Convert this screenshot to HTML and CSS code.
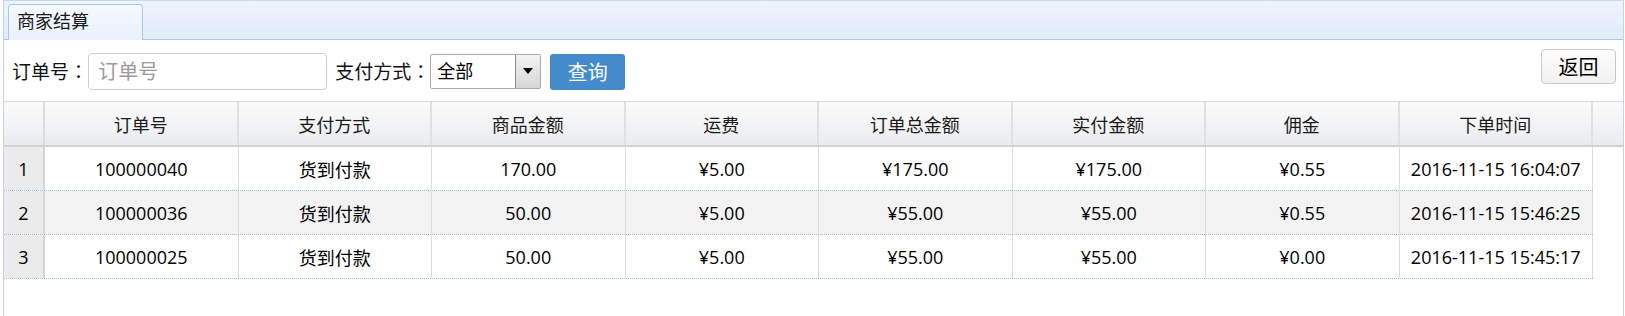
FILE: index.html
```html
<!DOCTYPE html>
<html lang="zh-CN">
<head>
    <meta charset="UTF-8">
    <meta name="viewport" content="width=device-width, initial-scale=1.0">
    <title>商家结算</title>
    <link rel="stylesheet" href="styles.css">
</head>
<body>
    <div class="panel">
        <div class="tabs">
            <div class="tab">商家结算</div>
        </div>
        <div class="toolbar">
            <label class="lbl">订单号<span class="colon" lang="zh-TW">：</span></label>
            <input type="text" class="txt" placeholder="订单号">
            <label class="lbl lbl-pay">支付方式<span class="colon" lang="zh-TW">：</span></label>
            <div class="sel">
                <span class="sel-text">全部</span>
                <span class="sel-btn"><span class="arrow"></span></span>
            </div>
            <button type="button" class="btn-query">查询</button>
            <button type="button" class="btn-back">返回</button>
        </div>
        <div class="grid">
            <div class="grid-head">
                <div class="cell num"></div>
                <div class="cell">订单号</div>
                <div class="cell">支付方式</div>
                <div class="cell">商品金额</div>
                <div class="cell">运费</div>
                <div class="cell">订单总金额</div>
                <div class="cell">实付金额</div>
                <div class="cell">佣金</div>
                <div class="cell">下单时间</div>
                <div class="cell filler"></div>
            </div>
            <div class="grid-row">
                <div class="cell num">1</div>
                <div class="cell">100000040</div>
                <div class="cell">货到付款</div>
                <div class="cell">170.00</div>
                <div class="cell">¥5.00</div>
                <div class="cell">¥175.00</div>
                <div class="cell">¥175.00</div>
                <div class="cell">¥0.55</div>
                <div class="cell">2016-11-15 16:04:07</div>
            </div>
            <div class="grid-row alt">
                <div class="cell num">2</div>
                <div class="cell">100000036</div>
                <div class="cell">货到付款</div>
                <div class="cell">50.00</div>
                <div class="cell">¥5.00</div>
                <div class="cell">¥55.00</div>
                <div class="cell">¥55.00</div>
                <div class="cell">¥0.55</div>
                <div class="cell">2016-11-15 15:46:25</div>
            </div>
            <div class="grid-row">
                <div class="cell num">3</div>
                <div class="cell">100000025</div>
                <div class="cell">货到付款</div>
                <div class="cell">50.00</div>
                <div class="cell">¥5.00</div>
                <div class="cell">¥55.00</div>
                <div class="cell">¥55.00</div>
                <div class="cell">¥0.00</div>
                <div class="cell">2016-11-15 15:45:17</div>
            </div>
        </div>
    </div>
</body>
</html>
```

FILE: styles.css
```css
body {
    margin: 0;
    font-family: "Open Sans", "Noto Sans CJK SC", sans-serif;
    font-size: 18px;
    color: #000;
    background: #fff;
}
.panel {
    margin-left: 3px;
    width: 1619px;
    height: 316px;
    border-left: 1px solid #c3d3e8;
    border-right: 1px solid #c3d3e8;
}
.tabs {
    height: 40px;
    padding-top: 3px;
    box-sizing: border-box;
    background: linear-gradient(#eef4fd, #e1ebfa);
    border-top: 1px solid #c6d9f3;
    border-bottom: 1px solid #a9c5ec;
    display: flex;
}
.tab {
    margin-left: 4px;
    width: 135px;
    height: 36px;
    box-sizing: border-box;
    border: 1px solid #a9c5ec;
    border-bottom: none;
    border-radius: 4px 4px 0 0;
    background: linear-gradient(#f6f9ff, #e9f1fd);
    padding-left: 8px;
    line-height: 32px;
    color: #1a1a1a;
}
.toolbar {
    height: 62px;
    display: flex;
    align-items: center;
    padding: 0 7px 0 8px;
    border-bottom: 1px solid #dcdcdc;
    box-sizing: border-box;
    font-size: 19px;
}
.lbl {
    color: #111;
    margin-right: 3px;
}
.colon {
    display: inline-block;
    width: 0.85em;
    text-align: center;
    font-family: "Noto Sans CJK TC", sans-serif;
}
.lbl-pay {
    margin-left: 8px;
}
.txt {
    width: 239px;
    height: 37px;
    box-sizing: border-box;
    border: 1px solid #ccc;
    border-radius: 4px;
    padding: 0 9px;
    font: inherit;
    font-size: 20px;
    margin-top: 1px;
}
.txt::placeholder {
    color: #999;
}
.sel {
    width: 111px;
    height: 35px;
    box-sizing: border-box;
    border: 1px solid #a9a9a9;
    border-radius: 2px;
    display: flex;
    align-items: stretch;
    margin-top: 1px;
    font-size: 18px;
}
.sel-text {
    flex: 1;
    line-height: 33px;
    padding-left: 6px;
}
.sel-btn {
    width: 24px;
    border-left: 1px solid #8c8c8c;
    background: linear-gradient(#f2f2f2, #d6d6d6);
    display: flex;
    align-items: center;
    justify-content: center;
}
.arrow {
    width: 0;
    height: 0;
    border-left: 5px solid transparent;
    border-right: 5px solid transparent;
    border-top: 6px solid #000;
}
.btn-query {
    margin-left: 9px;
    width: 75px;
    height: 36px;
    border: none;
    border-radius: 3px;
    background: #438bcb;
    color: #fff;
    font: inherit;
    font-size: 20px;
    margin-top: 2px;
    cursor: pointer;
}
.btn-back {
    margin-left: auto;
    align-self: flex-start;
    margin-top: 9px;
    width: 75px;
    height: 35px;
    border: 1px solid #c8c8c8;
    border-radius: 4px;
    background: linear-gradient(#fcfcfc, #f2f2f2);
    font: inherit;
    font-size: 20px;
    color: #000;
    cursor: pointer;
}
.grid-head,
.grid-row {
    display: grid;
    grid-template-columns: 41px repeat(8, 193.5px);
}
.grid-head {
    grid-template-columns: 41px repeat(8, 193.5px) 1fr;
    height: 43px;
    background: linear-gradient(#fafafa, #f3f4f5 50%, #eaebed);
    border-bottom: 2px solid #d2d2d2;
    color: #1a1a1a;
}
.cell {
    display: flex;
    align-items: center;
    justify-content: center;
    border-right: 1px solid #dcdcdc;
    white-space: nowrap;
}
.grid-head .cell {
    border-right: 2px solid #e0e0e0;
}
.grid-head .filler {
    border-right: none;
}
.grid-row {
    height: 43px;
    width: 1589px;
    border-bottom: 1px dotted #9fb3df;
}
.grid-row.alt {
    background: #f3f3f3;
}
.cell.num {
    background: #ebebeb;
    border-right: 2px solid #d6d6d6;
    box-sizing: border-box;
}
.grid-head .cell.num {
    background: transparent;
    border-right: 2px solid #dcdcdc;
}
```
